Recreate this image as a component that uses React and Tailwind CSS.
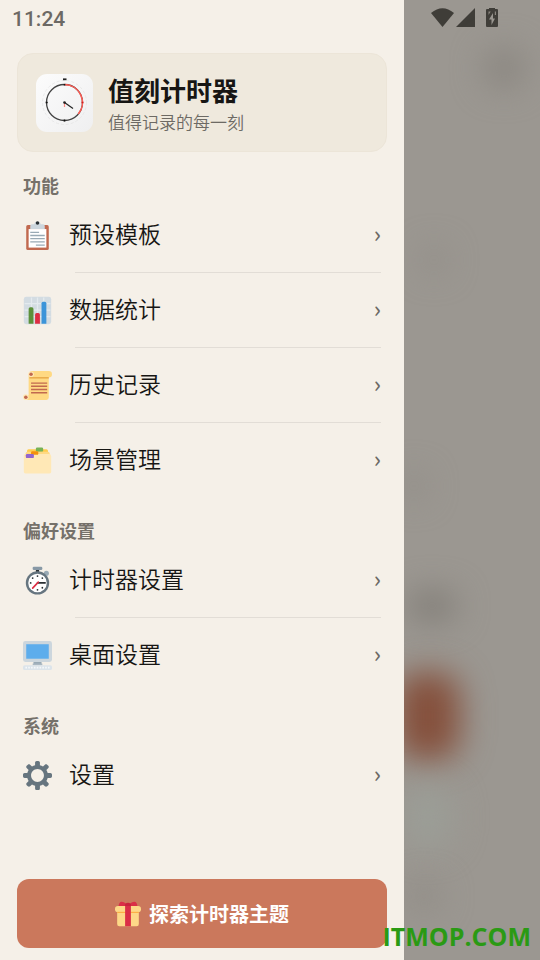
const font = "font-['Noto_Sans_CJK_SC','Noto_Sans',sans-serif]";

function ClipboardIcon() {
  return (
    <svg viewBox="0 0 36 36" className="size-[29px] shrink-0" aria-hidden="true">
      <rect x="4" y="5" width="28" height="31" rx="2" fill="#C1694F" />
      <path d="M7 10h22v23H7z" fill="#fff" />
      <path d="M9 10V6a2 2 0 0 1 2-2h3c.5-2.500 1.800-3 4-3s3.500.5 4 3h3a2 2 0 0 1 2 2v4z" fill="#CCD6DD" />
      <circle cx="18" cy="2.500" r="2.200" fill="#292F33" />
      <path d="M9 14h11M9 18h18M9 22h18M9 26h18M16 30h11" stroke="#99AAB5" strokeWidth="1.600" />
    </svg>
  );
}

function ChartIcon() {
  return (
    <svg viewBox="0 0 36 36" className="size-[29px] shrink-0" aria-hidden="true">
      <rect x="1" y="1" width="34" height="34" rx="3" fill="#D3DCE2" />
      <path d="M2 9.500h32M2 17.500h32M2 25.500h32M10.500 2v32M18 2v32M25.700 2v32" stroke="#E4EAEE" strokeWidth="1.600" />
      <path d="M13 34.500H7V16a2 2 0 0 1 2-2h2a2 2 0 0 1 2 2z" fill="#5C913B" />
      <path d="M29 34.500h-6V9a2 2 0 0 1 2-2h2a2 2 0 0 1 2 2z" fill="#3B94D9" />
      <path d="M21 34.500h-6V23a2 2 0 0 1 2-2h2a2 2 0 0 1 2 2z" fill="#DD2E44" />
    </svg>
  );
}

function ScrollIcon() {
  return (
    <svg viewBox="0 0 36 36" className="size-[29px] shrink-0" aria-hidden="true">
      <path d="M32 0H10a4 4 0 0 0-3 4v26H4a3 3 0 0 0 0 6h25a3 3 0 0 0 3-3V8a4 4 0 0 0 0-8z" fill="#FFD983" />
      <path d="M8 8.500h24" stroke="#E39F3D" strokeWidth="1.500" />
      <circle cx="10" cy="4" r="3.500" fill="#FFE8B6" />
      <circle cx="10" cy="4" r="2.200" fill="#C1694F" />
      <circle cx="3.500" cy="32.500" r="3.500" fill="#FFE8B6" />
      <circle cx="3.500" cy="32.500" r="2.200" fill="#C1694F" />
      <path d="M10 15h20M10 19h20M10 23h20M10 27h20" stroke="#C1694F" strokeWidth="1.700" />
    </svg>
  );
}

function FoldersIcon() {
  return (
    <svg viewBox="0 0 36 36" className="size-[29px] shrink-0" aria-hidden="true">
      <path d="M5 6a2 2 0 0 1 2-2h22a2 2 0 0 1 2 2v10H5z" fill="#FFCC4D" />
      <rect x="16" y="2" width="9" height="5" rx="1.500" fill="#77B255" />
      <path d="M3 10a3 3 0 0 1 3-3h25a2 2 0 0 1 2 2v8H3z" fill="#FFD983" />
      <path d="M1 14V12a2 2 0 0 1 2-2h29a3 3 0 0 1 3 3v19a2 2 0 0 1-2 2H3a2 2 0 0 1-2-2z" fill="#FFE8B6" />
      <rect x="10" y="6.500" width="9" height="4.500" rx="1.500" fill="#F4900C" />
      <rect x="3.500" y="10" width="10" height="5" rx="1.500" fill="#9266CC" />
    </svg>
  );
}

function StopwatchIcon() {
  return (
    <svg viewBox="0 0 36 36" className="size-[29px] shrink-0" aria-hidden="true">
      <path d="M16 3h4v5h-4z" fill="#292F33" />
      <rect x="12" y="1" width="12" height="4" rx="1.500" fill="#8899A6" />
      <circle cx="29" cy="9" r="3.200" fill="#99AAB5" />
      <circle cx="18" cy="21" r="14.500" fill="#66757F" />
      <circle cx="18" cy="21" r="11.500" fill="#fff" />
      <g fill="#292F33">
        <circle cx="18" cy="12.500" r="1.100" />
        <circle cx="18" cy="29.500" r="1.100" />
        <circle cx="9.500" cy="21" r="1.100" />
        <circle cx="12" cy="15" r="1.100" />
        <circle cx="24" cy="15" r="1.100" />
        <circle cx="24" cy="27" r="1.100" />
      </g>
      <path d="M18 21h9.500" stroke="#292F33" strokeWidth="2" strokeLinecap="round" />
      <path d="M19 20l-7 7.500" stroke="#DD2E44" strokeWidth="2" strokeLinecap="round" />
    </svg>
  );
}

function DesktopIcon() {
  return (
    <svg viewBox="0 0 36 36" className="size-[29px] shrink-0" aria-hidden="true">
      <path d="M13 25h10v5H13z" fill="#99AAB5" />
      <rect width="36" height="26" rx="3" fill="#CCD6DD" />
      <path d="M4 4h28v18H4z" fill="#5DADEC" />
      <path d="M12 28h12v2H12z" fill="#AAB8C2" />
      <rect y="30" width="36" height="6" rx="2" fill="#DCE4EA" />
      <path d="M3 33h30" stroke="#F5F8FA" strokeWidth="2" strokeDasharray="2 1.500" />
    </svg>
  );
}

function GearIcon() {
  return (
    <svg viewBox="0 0 36 36" className="size-[29px] shrink-0" aria-hidden="true">
      <path
        fill="#66757F"
        d="M34 15h-3.362c-.324-1.369-.864-2.651-1.582-3.814l2.379-2.379c.781-.781.781-2.048 0-2.829l-1.414-1.414c-.781-.781-2.047-.781-2.828 0l-2.379 2.379C23.650 6.225 22.369 5.686 21 5.362V2c0-1.104-.896-2-2-2h-2c-1.104 0-2 .896-2 2v3.362c-1.369.324-2.651.864-3.814 1.582L8.808 4.565c-.781-.781-2.048-.781-2.828 0L4.565 5.979c-.781.781-.781 2.048-.001 2.829l2.379 2.379C6.225 12.350 5.686 13.632 5.362 15H2c-1.104 0-2 .896-2 2v2c0 1.104.896 2 2 2h3.362c.324 1.368.864 2.650 1.582 3.813l-2.379 2.379c-.78.78-.78 2.048.001 2.829l1.414 1.414c.78.78 2.047.78 2.828 0l2.379-2.379c1.163.719 2.445 1.258 3.814 1.582V34c0 1.104.896 2 2 2h2c1.104 0 2-.896 2-2v-3.362c1.368-.324 2.650-.864 3.813-1.582l2.379 2.379c.781.781 2.047.781 2.828 0l1.414-1.414c.781-.781.781-2.048 0-2.829l-2.379-2.379c.719-1.163 1.258-2.445 1.582-3.814H34c1.104 0 2-.896 2-2v-2C36 15.896 35.104 15 34 15zM18 26c-4.418 0-8-3.582-8-8s3.582-8 8-8 8 3.582 8 8-3.582 8-8 8z"
      />
    </svg>
  );
}

function GiftIcon() {
  return (
    <svg viewBox="0 0 36 36" className="size-[26px] shrink-0" aria-hidden="true">
      <path d="M3 14h30v18a3 3 0 0 1-3 3H6a3 3 0 0 1-3-3z" fill="#FDD888" />
      <rect x="0" y="7" width="36" height="8.500" rx="4" fill="#FDD888" />
      <path d="M3 15h30v1.500H3z" fill="#FCAB40" />
      <path d="M14 6h8v29h-8z" fill="#DA2F47" />
      <path d="M5 7C5 4 7 1 9 1c3 0 5 2 7 3h4c2-1 4-3 7-3 2 0 4 3 4 6z" fill="#DA2F47" />
      <path d="M14 4q4-3 8 0v3h-8z" fill="#C8243C" />
    </svg>
  );
}

function AppLogo() {
  return (
    <svg viewBox="0 0 57 58" className="w-[57px] h-[58px] shrink-0" aria-hidden="true">
      <defs>
        <linearGradient id="tile" x1="0" y1="0" x2="1" y2="1">
          <stop offset="0" stopColor="#fcfcfc" />
          <stop offset="1" stopColor="#efeff0" />
        </linearGradient>
      </defs>
      <rect width="57" height="58" rx="11" fill="url(#tile)" />
      <circle cx="28.500" cy="28.500" r="22" fill="none" stroke="#e2e2e2" strokeWidth=".7" strokeDasharray="3 2" />
      <circle cx="28.500" cy="28.500" r="18" fill="none" stroke="#444" strokeWidth="1.300" />
      <path d="M28.500 10.500A18 18 0 0 1 42.300 40" fill="none" stroke="#ff5a52" strokeWidth="1.500" />
      <path d="M27 5.300h3.500" stroke="#222" strokeWidth="1.800" />
      <path d="M28.500 10v1.500M28.500 45.500v2M9.700 28.500h2" stroke="#111" strokeWidth="1.600" />
      <path d="M45.500 28.500h2" stroke="#c22" strokeWidth="1.600" />
      <path d="M28.500 28.500v4.500" stroke="#ff8a84" strokeWidth="1.200" />
      <path d="M28.500 28.500l8.500 6" stroke="#222" strokeWidth="1.200" />
      <circle cx="28.500" cy="28.500" r="1.300" fill="#222" />
    </svg>
  );
}

function StatusIcons() {
  return (
    <svg viewBox="0 0 68 20" className="w-[68px] h-5" fill="#3f3d38" aria-hidden="true">
      <path d="M0 5Q11.500-4.500 23 5L11.500 19z" />
      <path d="M25 19h19V0z" />
      <path
        fillRule="evenodd"
        d="M58 0a1 1 0 0 1 1-1h4a1 1 0 0 1 1 1v1h2a1 1 0 0 1 1 1v16a1 1 0 0 1-1 1H56a1 1 0 0 1-1-1V2a1 1 0 0 1 1-1h2zM62 5l-4 6.500h2.500V17L64 10.500h-2z"
      />
      <path d="M57.500 3.500h2.200L57.500 7zM65 3.500h-1.200V7H65z" fill="#8b8780" />
    </svg>
  );
}

const sections = [
  {
    title: "功能",
    items: [
      { label: "预设模板", Icon: ClipboardIcon },
      { label: "数据统计", Icon: ChartIcon },
      { label: "历史记录", Icon: ScrollIcon },
      { label: "场景管理", Icon: FoldersIcon },
    ],
  },
  {
    title: "偏好设置",
    items: [
      { label: "计时器设置", Icon: StopwatchIcon },
      { label: "桌面设置", Icon: DesktopIcon },
    ],
  },
  {
    title: "系统",
    items: [{ label: "设置", Icon: GearIcon }],
  },
];

function MenuItem({ label, Icon }) {
  return (
    <button type="button" className="flex w-full h-[74px] items-center gap-[17px] text-left">
      <Icon />
      <span className="flex flex-1 items-center justify-between pb-1 text-[23px] leading-8">
        <span className="font-[350] text-[#171614]">{label}</span>
        <span className="font-medium text-[#6d6a64]" aria-hidden="true">›</span>
      </span>
    </button>
  );
}

export default function App() {
  return (
    <div className={`relative flex min-h-screen overflow-hidden bg-[#9b9791] ${font}`}>
      {/* Drawer */}
      <aside className="flex w-3/4 max-w-[404px] shrink-0 flex-col bg-[#f5f0e8] px-[17px] pb-3">
        <div className="h-[53px] pt-[7px] -ml-[5px] font-['Roboto',sans-serif] text-[21px] leading-6 font-medium text-[#6c6964]">
          11:24
        </div>

        <header className="flex h-[99px] items-center gap-[15px] rounded-2xl border border-[#ece5d8] bg-[#efe9dd] px-[18px]">
          <AppLogo />
          <div>
            <h1 className="text-[26px] leading-[38px] font-bold text-[#171614]">值刻计时器</h1>
            <p className="text-[17px] leading-[26px] font-[350] text-[#6d6a64]">值得记录的每一刻</p>
          </div>
        </header>

        <nav className="flex-1 px-[6px]">
          {sections.map((section) => (
            <section key={section.title} className="mt-5">
              <h2 className="text-[18px] leading-[26px] font-bold text-[#75716a]">{section.title}</h2>
              <ul>
                {section.items.map((item, i) => (
                  <li key={item.label}>
                    {i > 0 && <div className="ml-[52px] h-px bg-[#e2ddd6]" />}
                    <MenuItem {...item} />
                  </li>
                ))}
              </ul>
            </section>
          ))}
        </nav>

        <button
          type="button"
          className="flex h-[69px] items-center justify-center gap-2 rounded-xl bg-[#cb785c] text-xl font-bold text-white"
        >
          <GiftIcon />
          探索计时器主题
        </button>
      </aside>

      {/* Dimmed page behind the drawer */}
      <div className="relative flex-1 overflow-hidden">
        <div className="pt-2 pl-[27px]">
          <StatusIcons />
        </div>
        <div className="absolute top-12 left-20 size-10 rounded-full bg-[#89857f] blur-lg" />
        <div className="absolute top-[592px] left-1 h-7 w-12 rounded-full bg-[#7f7b75] blur-lg" />
        <div className="absolute top-[672px] -left-2 h-[88px] w-[64px] rounded-3xl bg-[#85503c] blur-lg" />
        <div className="absolute top-[785px] left-0 h-16 w-12 rounded-full bg-[#9b9e97] blur-lg" />
        <div className="absolute top-[884px] left-1 h-6 w-8 rounded-full bg-[#8d8983] blur-lg" />
        <div className="absolute top-[474px] left-0 h-6 w-5 rounded-full bg-[#8d8983] blur-lg" />
        <div className="absolute top-[248px] left-5 h-6 w-5 rounded-full bg-[#8d8983] blur-lg" />
      </div>

      <div className="absolute right-[9px] bottom-2 font-['Open_Sans',sans-serif] text-[25px] leading-8 font-bold text-[#2a9a14]">
        ITMOP.COM
      </div>
    </div>
  );
}
